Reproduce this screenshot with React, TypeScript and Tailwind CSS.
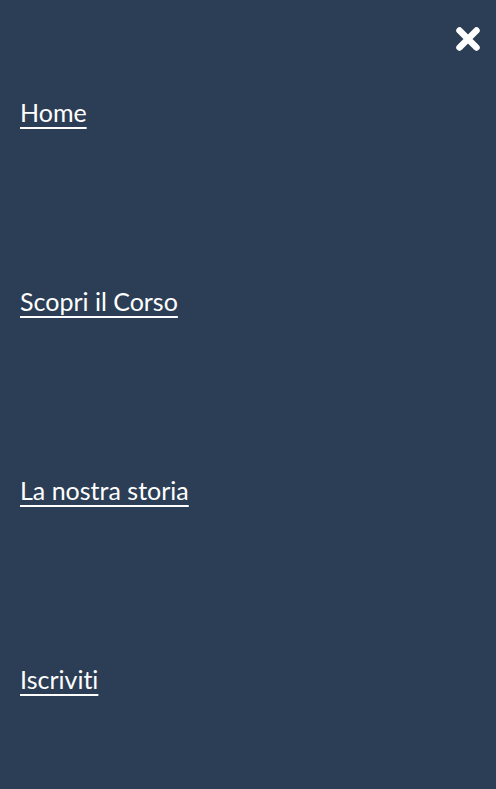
const links = ["Home", "Scopri il Corso", "La nostra storia", "Iscriviti"]

export default function App() {
  return (
    <div className="relative h-[789px] w-full overflow-hidden bg-[#2c3e55] font-['Lato','Liberation_Sans',sans-serif] text-white">
      <button className="absolute right-[16px] top-[27px] text-white" aria-label="Chiudi">
        <svg viewBox="0 0 24 24" className="size-6" fill="none" stroke="currentColor" strokeWidth="6.5" strokeLinecap="round">
          <path d="M3.5 3.5L20.5 20.5M20.5 3.5L3.5 20.5" />
        </svg>
      </button>
      <nav className="flex flex-col gap-[153px] px-5 pt-[94px]">
        {links.map((l) => (
          <a
            key={l}
            href="#"
            className="self-start text-[25px] leading-[36px] underline decoration-2 underline-offset-[5px] [font-variant-ligatures:none]"
          >
            {l}
          </a>
        ))}
      </nav>
    </div>
  )
}
